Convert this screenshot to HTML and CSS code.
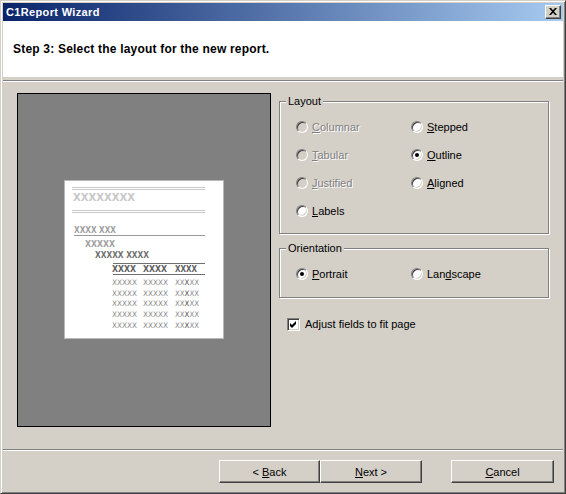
FILE: index.html
```html
<!DOCTYPE html>
<html>
<head>
<meta charset="utf-8">
<link rel="stylesheet" href="styles.css">
</head>
<body>
<div class="window">
  <div class="titlebar">
    <span class="title">C1Report Wizard</span>
    <span class="close"><svg width="8" height="7" viewBox="0 0 8 7"><path d="M0 0h2l2 2.3 2-2.3h2l-3 3.5 3 3.5h-2l-2-2.3-2 2.3h-2l3-3.5z" fill="#000"/></svg></span>
  </div>
  <div class="header"><span class="step">Step 3: Select the layout for the new report.</span></div>
  <div class="sep top"></div>
  <div class="content">
    <div class="preview">
      <div class="paper">
        <svg class="sheet" width="158" height="157" viewBox="0 0 158 157">
          <g shape-rendering="crispEdges">
            <rect x="7" y="6" width="133" height="1" fill="#c8c8c8"/>
            <rect x="7" y="8" width="133" height="1" fill="#c8c8c8"/>
            <rect x="7" y="29" width="133" height="1" fill="#c8c8c8"/>
            <rect x="7" y="31" width="133" height="1" fill="#c8c8c8"/>
            <rect x="9" y="54" width="131" height="1" fill="#999"/>
            <rect x="48" y="82" width="92" height="1" fill="#707070"/>
            <rect x="48" y="93" width="92" height="1" fill="#707070"/>
          </g>
          <text class="xx b" x="8" y="20" textLength="62" lengthAdjust="spacingAndGlyphs" font-size="9.6" fill="#c8c8c8">XXXXXXXX</text>
          <text class="xx b" x="9" y="52" textLength="42" lengthAdjust="spacingAndGlyphs" font-size="8.2" fill="#a0a0a0">XXXX XXX</text>
          <text class="xx b" x="20" y="66" textLength="30" lengthAdjust="spacingAndGlyphs" font-size="8.2" fill="#a0a0a0">XXXXX</text>
          <text class="xx b" x="30" y="77" textLength="54" lengthAdjust="spacingAndGlyphs" font-size="8.2" fill="#707070">XXXXX XXXX</text>
          <text class="xx b" x="47" y="91" textLength="24" lengthAdjust="spacingAndGlyphs" font-size="9.2" fill="#606060">XXXX</text>
          <text class="xx b" x="78" y="91" textLength="24" lengthAdjust="spacingAndGlyphs" font-size="9.2" fill="#606060">XXXX</text>
          <text class="xx b" x="110" y="91" textLength="22" lengthAdjust="spacingAndGlyphs" font-size="9.2" fill="#606060">XXXX</text>
          <g class="xx" font-size="7.6" fill="#8c8c8c">
            <text x="47" y="104" textLength="25" lengthAdjust="spacingAndGlyphs">XXXXX</text>
            <text x="78" y="104" textLength="25" lengthAdjust="spacingAndGlyphs">XXXXX</text>
            <text x="110" y="104" textLength="24" lengthAdjust="spacingAndGlyphs">XX<tspan fill="#505050">X</tspan>XX</text>
            <text x="47" y="115" textLength="25" lengthAdjust="spacingAndGlyphs">XXXXX</text>
            <text x="78" y="115" textLength="25" lengthAdjust="spacingAndGlyphs">XXXXX</text>
            <text x="110" y="115" textLength="24" lengthAdjust="spacingAndGlyphs">XX<tspan fill="#505050">X</tspan>XX</text>
            <text x="47" y="125" textLength="25" lengthAdjust="spacingAndGlyphs">XXXXX</text>
            <text x="78" y="125" textLength="25" lengthAdjust="spacingAndGlyphs">XXXXX</text>
            <text x="110" y="125" textLength="24" lengthAdjust="spacingAndGlyphs">XX<tspan fill="#505050">X</tspan>XX</text>
            <text x="47" y="136" textLength="25" lengthAdjust="spacingAndGlyphs">XXXXX</text>
            <text x="78" y="136" textLength="25" lengthAdjust="spacingAndGlyphs">XXXXX</text>
            <text x="110" y="136" textLength="24" lengthAdjust="spacingAndGlyphs">XX<tspan fill="#505050">X</tspan>XX</text>
            <text x="47" y="147" textLength="25" lengthAdjust="spacingAndGlyphs">XXXXX</text>
            <text x="78" y="147" textLength="25" lengthAdjust="spacingAndGlyphs">XXXXX</text>
            <text x="110" y="147" textLength="24" lengthAdjust="spacingAndGlyphs">XX<tspan fill="#505050">X</tspan>XX</text>
          </g>
        </svg>
      </div>
    </div>
    <div class="options">
      <fieldset class="group layout">
        <legend>Layout</legend>
        <div class="grid">
          <div class="opt disabled"><span class="radio"></span><span class="lbl"><u>C</u>olumnar</span></div>
          <div class="opt"><span class="radio"></span><span class="lbl"><u>S</u>tepped</span></div>
          <div class="opt disabled"><span class="radio"></span><span class="lbl"><u>T</u>abular</span></div>
          <div class="opt"><span class="radio on"></span><span class="lbl"><u>O</u>utline</span></div>
          <div class="opt disabled"><span class="radio"></span><span class="lbl"><u>J</u>ustified</span></div>
          <div class="opt"><span class="radio"></span><span class="lbl"><u>A</u>ligned</span></div>
          <div class="opt"><span class="radio"></span><span class="lbl"><u>L</u>abels</span></div>
        </div>
      </fieldset>
      <fieldset class="group orient">
        <legend>Orientation</legend>
        <div class="grid">
          <div class="opt"><span class="radio on"></span><span class="lbl"><u>P</u>ortrait</span></div>
          <div class="opt"><span class="radio"></span><span class="lbl">Lan<u>d</u>scape</span></div>
        </div>
      </fieldset>
      <div class="check">
        <span class="box"><svg width="7" height="7" viewBox="0 0 7 7"><path d="M0 2L2 4L6 0V3L2 7L0 5Z" fill="#000"/></svg></span>
        <span class="lbl">Adjust fields to fit page</span>
      </div>
    </div>
  </div>
  <div class="sep"></div>
  <div class="buttons">
    <span class="btn back"><span class="cap">&lt; <u>B</u>ack</span></span>
    <span class="btn next"><span class="cap"><u>N</u>ext &gt;</span></span>
    <span class="btn cancel"><span class="cap"><u>C</u>ancel</span></span>
  </div>
</div>
</body>
</html>
```
FILE: styles.css
```css
html, body {
  margin: 0;
  padding: 0;
  background: #d4d0c8;
}
body {
  font-family: "Liberation Sans", Arial, sans-serif;
  font-size: 11px;
  color: #000;
}
.window {
  width: 566px;
  height: 494px;
  box-sizing: border-box;
  border: 1px solid;
  border-color: #d4d0c8 #404040 #404040 #d4d0c8;
  box-shadow: inset 1px 1px #fff, inset -1px -1px #808080;
  padding: 2px;
  display: flex;
  flex-direction: column;
  background: #d4d0c8;
}
.titlebar {
  height: 18px;
  flex: none;
  background: linear-gradient(to right, #0a246a, #a6caf0);
  display: flex;
  align-items: center;
  justify-content: space-between;
  padding: 0 2px 0 3px;
  color: #fff;
  font-weight: bold;
  font-size: 11px;
}
.title { letter-spacing: 0.35px; }
.close {
  width: 16px;
  height: 14px;
  box-sizing: border-box;
  background: #d4d0c8;
  border: 1px solid;
  border-color: #fff #404040 #404040 #fff;
  box-shadow: inset -1px -1px #808080;
  display: flex;
  align-items: center;
  justify-content: center;
}
.close svg { display: block; margin: 0 1px 1px 0; }
.header {
  height: 56px;
  flex: none;
  background: #fff;
  display: flex;
  align-items: center;
  padding-left: 10px;
  font-weight: bold;
  font-size: 12px;
}
.step { letter-spacing: 0.2px; }
.sep {
  height: 1px;
  flex: none;
  background: #808080;
  border-bottom: 1px solid #fff;
}
.sep.top { margin-top: 3px; }
.content {
  height: 367px;
  flex: none;
  box-sizing: border-box;
  display: flex;
  align-items: flex-start;
  padding: 11px 0 0 14px;
  gap: 8px;
}
.preview {
  width: 254px;
  height: 334px;
  box-sizing: border-box;
  border: 1px solid #000;
  background: #808080;
  display: flex;
  align-items: center;
  justify-content: center;
}
.paper {
  width: 160px;
  height: 159px;
  box-sizing: border-box;
  border: 1px solid #b8b8b8;
  background: #fff;
  margin: 0 1px 1px 0;
}
.sheet { display: block; }
.xx { font-family: "DejaVu Sans", sans-serif; }
.xx.b { font-weight: bold; }
.options {
  width: 270px;
  margin-top: 2px;
  display: flex;
  flex-direction: column;
}
.group {
  margin: 0;
  min-inline-size: 0;
  box-sizing: border-box;
  width: 270px;
  border: 1px solid #808080;
  box-shadow: inset 1px 1px #fff, 1px 1px #fff;
  padding: 5px 0 8px 6px;
}
.group legend {
  padding: 0 2px;
  margin: 0;
  line-height: 13px;
  background: #d4d0c8;
}
.orient { margin-top: 8px; padding-bottom: 9px; }
.grid {
  display: grid;
  grid-template-columns: 115px 1fr;
  grid-auto-rows: 28px;
  padding-left: 10px;
}
.opt {
  display: flex;
  align-items: center;
}
.radio {
  width: 12px;
  height: 12px;
  box-sizing: border-box;
  border-radius: 50%;
  border: 1px solid;
  border-color: #808080 #fff #fff #808080;
  background: #fff;
  box-shadow: inset 1px 1px #404040, inset -1px -1px #d4d0c8;
  position: relative;
  flex: none;
}
.radio.on::after {
  content: "";
  position: absolute;
  left: 3px;
  top: 3px;
  width: 4px;
  height: 4px;
  border-radius: 50%;
  background: #000;
}
.opt .lbl { margin-left: 4px; line-height: 13px; }
.disabled .radio { background: #d4d0c8; }
.disabled .lbl {
  color: #808080;
  text-shadow: 1px 1px 0 #fff;
}
.check {
  display: flex;
  align-items: center;
  margin: 20px 0 0 8px;
}
.box {
  width: 13px;
  height: 13px;
  box-sizing: border-box;
  border: 1px solid;
  border-color: #808080 #fff #fff #808080;
  box-shadow: inset 1px 1px #404040, inset -1px -1px #d4d0c8;
  background: #fff;
  display: flex;
  align-items: center;
  justify-content: center;
  flex: none;
}
.box svg { display: block; }
.check .lbl { margin-left: 5px; line-height: 13px; }
.buttons {
  flex: 1;
  display: flex;
  align-items: flex-start;
  padding: 9px 0 0 216px;
}
.btn {
  height: 23px;
  box-sizing: border-box;
  border: 1px solid;
  border-color: #fff #404040 #404040 #fff;
  box-shadow: inset -1px -1px #808080;
  background: #d4d0c8;
  display: flex;
  align-items: center;
  justify-content: center;
}
.cap { white-space: pre; }
.back { width: 101px; }
.next { width: 102px; }
.cancel { width: 103px; margin-left: 29px; }
```
